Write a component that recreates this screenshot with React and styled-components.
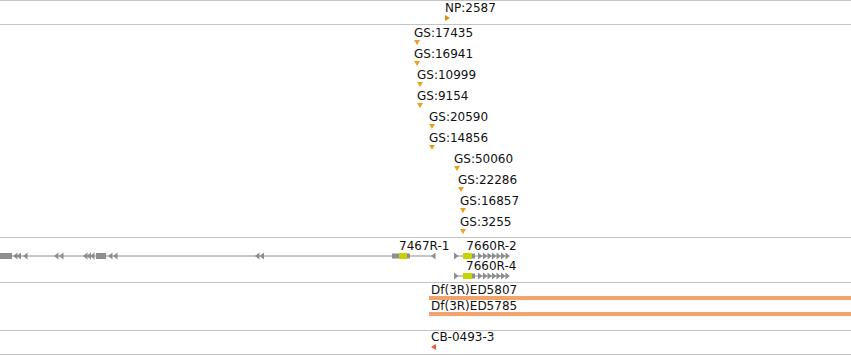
import React from "react";
import styled, { createGlobalStyle } from "styled-components";

const GlobalStyle = createGlobalStyle`
    body {
        margin: 0;
        background: #ffffff;
        font-family: "DejaVu Sans", "Liberation Sans", sans-serif;
    }
`;

const Panel = styled.div`
    width: 851px;
    display: flex;
    flex-direction: column;
    border-bottom: 1px solid #c4c4c4;
`;

const Track = styled.div`
    box-sizing: border-box;
    height: ${(p) => p.$h}px;
    padding-top: ${(p) => p.$pad || 0}px;
    border-top: 1px solid #c4c4c4;
    display: flex;
    flex-direction: column;
    overflow: hidden;
`;

// one feature: label with its mark below, placed at its genome position
const Feature = styled.div`
    display: flex;
    flex-direction: column;
    align-items: flex-start;
    margin-left: ${(p) => p.$x}px;
    height: ${(p) => p.$h}px;
    flex-shrink: 0;
`;

const LabelRow = styled.div`
    display: flex;
    height: ${(p) => p.$h}px;
    flex-shrink: 0;
`;

const Label = styled.span`
    margin-left: ${(p) => p.$x || 0}px;
    font-size: 12px;
    line-height: ${(p) => p.$lh || 14}px;
    height: ${(p) => p.$lh || 14}px;
    color: #111;
    white-space: nowrap;
`;

const Marker = styled.span`
    display: block;
    width: 0;
    height: 0;
    flex-shrink: 0;
    ${(p) =>
        p.$dir === "down" &&
        `border-left: 3px solid transparent;
         border-right: 3px solid transparent;
         border-top: 5px solid ${p.$color};`}
    ${(p) =>
        p.$dir === "right" &&
        `border-top: 3px solid transparent;
         border-bottom: 3px solid transparent;
         border-left: 5px solid ${p.$color};`}
    ${(p) =>
        p.$dir === "left" &&
        `border-top: 3px solid transparent;
         border-bottom: 3px solid transparent;
         border-right: 5px solid ${p.$color};`}
`;

const Glyph = styled.svg`
    display: block;
    flex-shrink: 0;
    overflow: visible;
`;

const Bar = styled.div`
    margin-left: ${(p) => p.$x}px;
    height: 4px;
    flex-shrink: 0;
    background: #f4a26c;
`;

const GRAY = "#8e8e8e";
const CDS = "#c6d400";

const gsHits = [
    ["GS:17435", 414],
    ["GS:16941", 414],
    ["GS:10999", 417],
    ["GS:9154", 417],
    ["GS:20590", 429],
    ["GS:14856", 429],
    ["GS:50060", 454],
    ["GS:22286", 458],
    ["GS:16857", 460],
    ["GS:3255", 460],
];

const deletions = ["Df(3R)ED5807", "Df(3R)ED5785"];

const leftArrow = (x) => `M${x} 4 L${x + 4.5} 0.5 L${x + 4.5} 7.5 Z`;
const rightArrow = (x) => `M${x + 4.5} 4 L${x} 0.5 L${x} 7.5 Z`;

const RightGene = () => {
    const arrows = [478, 483, 487.5, 492, 496.5, 501, 505.5];
    return (
        <g>
            <line x1="454" x2="508" y1="4" y2="4" stroke={GRAY} strokeWidth="1" />
            <path d={rightArrow(454)} fill={GRAY} />
            <rect x="463" y="1" width="9" height="6" fill={CDS} />
            <rect x="472" y="1.5" width="3" height="5" fill={GRAY} />
            {arrows.map((x) => (
                <path key={x} d={rightArrow(x)} fill={GRAY} />
            ))}
        </g>
    );
};

const LeftGene = () => {
    const arrows = [13, 16.5, 23, 54, 59, 83, 86.5, 90, 108, 113, 255, 259.5, 431];
    return (
        <g>
            <line x1="0" x2="435" y1="4" y2="4" stroke={GRAY} strokeWidth="1" />
            <rect x="0" y="1" width="12" height="6" fill={GRAY} />
            <rect x="96" y="1" width="10" height="6" fill={GRAY} />
            {arrows.map((x) => (
                <path key={x} d={leftArrow(x)} fill={GRAY} />
            ))}
            <rect x="392" y="1.5" width="8" height="5" fill={GRAY} />
            <rect x="399" y="1" width="8" height="6" fill={CDS} />
            <rect x="407" y="1.5" width="3" height="5" fill={GRAY} />
        </g>
    );
};

export default function App() {
    return (
        <>
            <GlobalStyle />
            <Panel>
                <Track $h={24}>
                    <Feature $x={445}>
                        <Label>NP:2587</Label>
                        <Marker $dir="right" $color="#d98e0e" />
                    </Feature>
                </Track>

                <Track $h={213} $pad={1}>
                    {gsHits.map(([name, x]) => (
                        <Feature key={name} $x={x} $h={21}>
                            <Label>{name}</Label>
                            <Marker $dir="down" $color="#eba023" />
                        </Feature>
                    ))}
                </Track>

                <Track $h={45} $pad={1}>
                    <LabelRow $h={13}>
                        <Label $x={399}>7467R-1</Label>
                        <Label $x={17}>7660R-2</Label>
                    </LabelRow>
                    <Glyph width="851" height="7">
                        <LeftGene />
                        <RightGene />
                    </Glyph>
                    <LabelRow $h={13}>
                        <Label $x={466}>7660R-4</Label>
                    </LabelRow>
                    <Glyph width="851" height="7">
                        <RightGene />
                    </Glyph>
                </Track>

                <Track $h={48} $pad={1}>
                    {deletions.map((name) => (
                        <React.Fragment key={name}>
                            <LabelRow $h={12}>
                                <Label $x={431} $lh={12}>{name}</Label>
                            </LabelRow>
                            <Bar $x={429} />
                        </React.Fragment>
                    ))}
                </Track>

                <Track $h={24}>
                    <Feature $x={431}>
                        <Label $lh={13}>CB-0493-3</Label>
                        <Marker $dir="left" $color="#f0583a" />
                    </Feature>
                </Track>
            </Panel>
        </>
    );
}
